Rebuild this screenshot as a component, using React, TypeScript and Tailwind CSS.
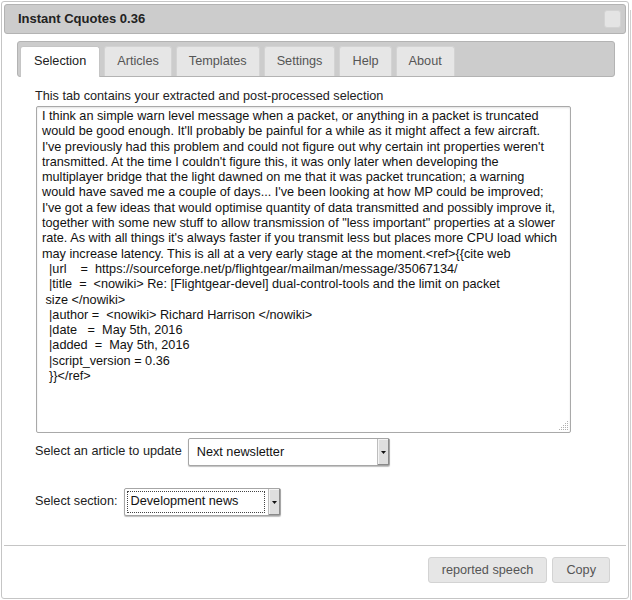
import React from "react";

const lines: string[] = [
  "I think an simple warn level message when a packet, or anything in a packet is truncated",
  "would be good enough. It'll probably be painful for a while as it might affect a few aircraft.",
  "I've previously had this problem and could not figure out why certain int properties weren't",
  "transmitted. At the time I couldn't figure this, it was only later when developing the",
  "multiplayer bridge that the light dawned on me that it was packet truncation; a warning",
  "would have saved me a couple of days... I've been looking at how MP could be improved;",
  "I've got a few ideas that would optimise quantity of data transmitted and possibly improve it,",
  "together with some new stuff to allow transmission of \"less important\" properties at a slower",
  "rate. As with all things it's always faster if you transmit less but places more CPU load which",
  "may increase latency. This is all at a very early stage at the moment.<ref>{{cite web",
  "  |url    =  https://sourceforge.net/p/flightgear/mailman/message/35067134/",
  "  |title  =  <nowiki> Re: [Flightgear-devel] dual-control-tools and the limit on packet",
  " size </nowiki>",
  "  |author =  <nowiki> Richard Harrison </nowiki>",
  "  |date   =  May 5th, 2016",
  "  |added  =  May 5th, 2016",
  "  |script_version = 0.36",
  "  }}</ref>",
];

const tabs = ["Selection", "Articles", "Templates", "Settings", "Help", "About"];

function Arrow() {
  return (
    <div className="w-[12px] self-stretch bg-[#dedede] border-l border-[#bdbdbd] shadow-[inset_-1px_-1px_0_#8a8a8a,inset_1px_1px_0_#f4f4f4] flex items-center justify-center">
      <svg width="5" height="3" viewBox="0 0 5 3">
        <polygon points="0,0 5,0 2.5,3" fill="#111" />
      </svg>
    </div>
  );
}

export default function App() {
  return (
    <div className="w-[632px] h-[600px] bg-white flex font-['Liberation_Sans',Arial,sans-serif] text-[12.7px] overflow-hidden">
      <div className="ml-[1px] mt-[1px] w-[628px] h-[598px] border border-[#c5c5c5] rounded-[3px] p-[2px] flex flex-col bg-white">
        {/* Title bar */}
        <div className="h-[30px] flex items-center justify-between border border-[#b3b3b3] bg-[#cccccc] rounded-[3px] pl-[13px] pr-[4px]">
          <span className="font-bold text-[13px] text-[#222222]">Instant Cquotes 0.36</span>
          <div className="w-[17px] h-[18px] bg-[#e4e4e4] border border-[#d3d3d3] rounded-[3px]" />
        </div>

        {/* Content */}
        <div className="flex-1 pl-[13px] pr-[10px] pt-[7px]">
          <div className="w-[598px] h-[36px] border border-[#b3b3b3] bg-[#cccccc] rounded-[3px] flex items-end gap-[4px] pl-[2px]">
            {tabs.map((t, i) =>
              i === 0 ? (
                <div
                  key={t}
                  className="h-[31px] -mb-[1px] px-[13px] flex items-center border border-b-0 border-[#c5c5c5] rounded-t-[3px] bg-white text-[#212121]"
                >
                  {t}
                </div>
              ) : (
                <div
                  key={t}
                  className="h-[30px] px-[12px] flex items-center border border-b-0 border-[#d3d3d3] rounded-t-[3px] bg-[#e6e6e6] text-[#555555]"
                >
                  {t}
                </div>
              )
            )}
          </div>

          <div className="pl-[18px] pt-[12px]">
            <div className="leading-[15px] text-[#222222]">This tab contains your extracted and post-processed selection</div>
            <div className="relative mt-[2px] ml-[1px] w-[535px] h-[327px] border border-[#a9a9a9] rounded-[2px] shadow-[inset_0_1px_2px_rgba(0,0,0,0.12)] bg-white pl-[5px] pt-[2px] text-[#111111]">
              {lines.map((l, i) => (
                <div key={i} className="whitespace-pre leading-[15.3px]">
                  {l}
                </div>
              ))}
              <svg className="absolute right-[1px] bottom-[1px]" width="10" height="10" viewBox="0 0 10 10">
                <rect x="8" y="0" width="1" height="1" fill="#b0b0b0" />
                <rect x="6" y="2" width="1" height="1" fill="#b0b0b0" />
                <rect x="8" y="2" width="1" height="1" fill="#b0b0b0" />
                <rect x="4" y="4" width="1" height="1" fill="#b0b0b0" />
                <rect x="6" y="4" width="1" height="1" fill="#b0b0b0" />
                <rect x="8" y="4" width="1" height="1" fill="#b0b0b0" />
                <rect x="2" y="6" width="1" height="1" fill="#b0b0b0" />
                <rect x="4" y="6" width="1" height="1" fill="#b0b0b0" />
                <rect x="6" y="6" width="1" height="1" fill="#b0b0b0" />
                <rect x="8" y="6" width="1" height="1" fill="#b0b0b0" />
                <rect x="0" y="8" width="1" height="1" fill="#b0b0b0" />
                <rect x="2" y="8" width="1" height="1" fill="#b0b0b0" />
                <rect x="4" y="8" width="1" height="1" fill="#b0b0b0" />
                <rect x="6" y="8" width="1" height="1" fill="#b0b0b0" />
                <rect x="8" y="8" width="1" height="1" fill="#b0b0b0" />
              </svg>
            </div>

            <div className="mt-[5px] flex items-center gap-[6px]">
              <span className="text-[#222222]">Select an article to update</span>
              <div className="w-[202px] h-[28px] border border-[#a6a6a6] rounded-[2px] shadow-[0_1px_1px_rgba(0,0,0,0.25)] bg-white flex">
                <div className="flex-1 pl-[8px] pt-[4px] text-[#111111]">Next newsletter</div>
                <Arrow />
              </div>
            </div>

            <div className="mt-[22px] flex items-center gap-[6px]">
              <span className="text-[#222222]">Select section:</span>
              <div className="w-[157px] h-[28px] border border-[#a6a6a6] rounded-[2px] shadow-[0_1px_1px_rgba(0,0,0,0.25)] bg-white flex">
                <div className="flex-1 p-[2px] pr-[3px]">
                  <div className="h-full border border-dotted border-[#444444] pl-[3px] leading-[18px] text-[#111111]">
                    Development news
                  </div>
                </div>
                <Arrow />
              </div>
            </div>
          </div>
        </div>

        {/* Button pane */}
        <div className="border-t border-[#c5c5c5] h-[51px] flex justify-end items-start pt-[11px] pr-[16px] gap-[5px]">
          <div className="h-[26px] px-[13px] pt-[1px] flex items-center border border-[#d3d3d3] rounded-[3px] bg-[#e6e6e6] text-[#555555]">
            reported speech
          </div>
          <div className="h-[26px] px-[13px] pt-[1px] flex items-center border border-[#d3d3d3] rounded-[3px] bg-[#e6e6e6] text-[#555555]">
            Copy
          </div>
        </div>
      </div>
      <div className="ml-[1px] mt-[10px] w-[1px] h-[590px] bg-[#cfcfcf]" />
    </div>
  );
}
